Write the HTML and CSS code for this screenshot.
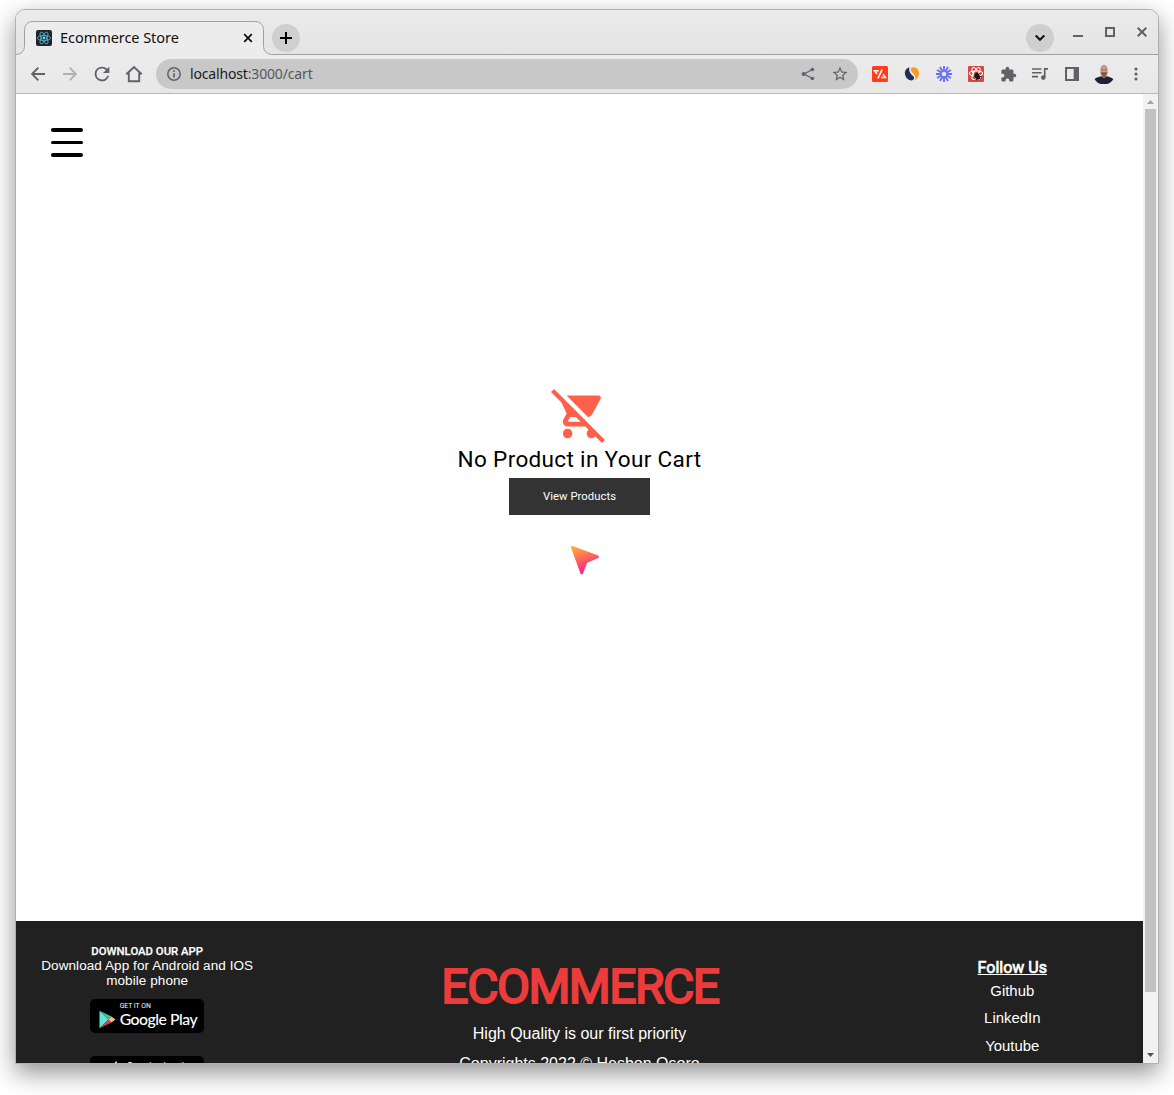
FILE: index.html
```html
<!DOCTYPE html>
<html lang="en">
<head>
<meta charset="utf-8">
<title>Ecommerce Store</title>
<link rel="stylesheet" href="styles.css">
</head>
<body>
<div class="window">
  <header class="tabstrip">
    <svg class="tab-outline" width="1142" height="45" viewBox="0 0 1142 45"><path d="M-1 44.5H0a8 8 0 0 0 8.5-8V19.5a8 8 0 0 1 8-8H239.5a8 8 0 0 1 8 8V36.500a8 8 0 0 0 8 8H1143V46H-1z" fill="#ececec" stroke="#a0a0a0"/></svg>
    <div class="tab">
      <svg class="favicon" viewBox="0 0 16 16" width="16" height="16"><rect width="16" height="16" rx="2" fill="#20232a"/><g fill="none" stroke="#55bdd6" stroke-width=".8"><ellipse cx="8" cy="8" rx="6.6" ry="2.6"/><ellipse cx="8" cy="8" rx="6.600" ry="2.600" transform="rotate(60 8 8)"/><ellipse cx="8" cy="8" rx="6.6" ry="2.6" transform="rotate(120 8 8)"/></g><circle cx="8" cy="8" r="1.4" fill="#61dafb"/></svg>
      <span class="tab-title">Ecommerce Store</span>
      <svg class="tab-close" viewBox="0 0 10 10" width="10" height="10"><path d="M1.200 1.200l7.600 7.600M8.800 1.200L1.200 8.800" stroke="#111" stroke-width="1.800"/></svg>
    </div>
    <div class="round-button new-tab"><svg width="14" height="14" viewBox="0 0 14 14"><path d="M7 1v12M1 7h12" stroke="#000" stroke-width="2"/></svg></div>
    <div class="round-button tab-search"><svg width="12" height="8" viewBox="0 0 12 8"><path d="M1.700 1.500L6 5.800l4.300-4.300" fill="none" stroke="#111" stroke-width="2"/></svg></div>
    <div class="window-controls">
      <svg viewBox="0 0 12 12"><path d="M1 10h10" stroke="#5f6368" stroke-width="2"/></svg>
      <svg viewBox="0 0 12 12"><path d="M2 2h8v8H2z" fill="none" stroke="#5f6368" stroke-width="2"/></svg>
      <svg viewBox="0 0 12 12"><path d="M1.700 1.700l8.600 8.600M10.300 1.700l-8.600 8.600" stroke="#5f6368" stroke-width="2"/></svg>
    </div>
  </header>
  <nav class="toolbar">
    <span class="tool"><svg viewBox="0 0 14 14" width="14" height="14"><path d="M14 7H1.500M7.300 .7L1 7l6.300 6.300" fill="none" stroke="#5f6368" stroke-width="1.900"/></svg></span>
    <span class="tool"><svg viewBox="0 0 14 14" width="14" height="14"><path d="M0 7h12.500M6.700 .7L13 7l-6.300 6.300" fill="none" stroke="#aeb0b2" stroke-width="1.900"/></svg></span>
    <span class="tool"><svg viewBox="0 0 24 24" width="22" height="22"><path fill="#5f6368" d="M17.650 6.350A7.960 7.960 0 0 0 12 4a8 8 0 1 0 7.730 10h-2.080A6 6 0 1 1 12 6c1.660 0 3.140.69 4.220 1.780L13 11h7V4z"/></svg></span>
    <span class="tool"><svg viewBox="0 0 18 18" width="18" height="18"><path d="M1.300 9.200L9 2l7.700 7.200M3.800 8v8.200h10.400V8" fill="none" stroke="#5f6368" stroke-width="1.900"/></svg></span>
    <div class="omnibox">
      <svg viewBox="0 0 14 14" width="14" height="14"><circle cx="7" cy="7" r="6.200" fill="none" stroke="#5f6368" stroke-width="1.500"/><path d="M7 6.200v4.300M7 3.300v1.700" stroke="#5f6368" stroke-width="1.700"/></svg>
      <span class="url"><b>localhost</b>:3000/cart</span>
      <svg class="share" viewBox="0 0 14 14" width="14" height="14"><path d="M11.500 2.500L3 7l8.500 4.500" fill="none" stroke="#5f6368" stroke-width="1.300"/><g fill="#5f6368"><circle cx="11.400" cy="2.500" r="1.800"/><circle cx="2.600" cy="7" r="2"/><circle cx="11.400" cy="11.500" r="1.800"/></g></svg>
      <svg viewBox="0 0 24 24" width="18" height="18"><path fill="#5f6368" d="M22 9.240l-7.190-.62L12 2 9.190 8.630 2 9.240l5.460 4.730L5.820 21 12 17.270 18.180 21l-1.630-7.030L22 9.240zM12 15.400l-3.760 2.270 1-4.280-3.320-2.880 4.380-.38L12 6.100l1.710 4.040 4.380.38-3.320 2.880 1 4.280L12 15.400z"/></svg>
    </div>
    <span class="tool"><svg viewBox="0 0 16 16" width="16" height="16"><rect width="16" height="16" rx="1.500" fill="#ff3d1a"/><path d="M10.200 3.300L5.800 12.500M6.800 4.700H2.500L5 8M9.200 11.500h4.300L11 8.200" fill="none" stroke="#fff" stroke-width="1.600"/></svg></span>
    <span class="tool"><svg viewBox="0 0 16 16" width="16" height="16"><path fill="#1f2f56" d="M5.300 1.200C1.800 2.500.7 5.200.9 7.500c.3 4 3.400 7 6.500 7 2.500 0 3.500-2.500 2-4.200C7.800 8.600 4.300 6.200 5.300 1.200z"/><path fill="#f99b28" d="M7.300 2c1.700-1.500 4.700-.9 6.400 1.300 2.700 3.700 1 9-2.900 11 .9-2 .8-3.800-.6-5.500C8.700 7 5.300 4.300 7.300 2z"/></svg></span>
    <span class="tool"><svg viewBox="0 0 16 16" width="16" height="16"><g stroke="#6870f5" stroke-width="1.900" stroke-dasharray="5.700 4.600"><path d="M8 0v16"/><path d="M8 0v16" transform="rotate(30 8 8)"/><path d="M8 0v16" transform="rotate(60 8 8)"/><path d="M8 0v16" transform="rotate(90 8 8)"/><path d="M8 0v16" transform="rotate(120 8 8)"/><path d="M8 0v16" transform="rotate(150 8 8)"/></g></svg></span>
    <span class="tool"><svg viewBox="0 0 16 16" width="16" height="16"><rect width="16" height="16" rx="1" fill="#d94744"/><g fill="none" stroke="#fff" stroke-width="1.100"><ellipse cx="8" cy="7.500" rx="6.600" ry="2.500"/><ellipse cx="8" cy="7.500" rx="6.600" ry="2.500" transform="rotate(60 8 7.500)"/><ellipse cx="8" cy="7.500" rx="6.600" ry="2.500" transform="rotate(120 8 7.500)"/></g><ellipse cx="9.300" cy="10.300" rx="2.600" ry="3.600" fill="#241414" transform="rotate(-25 9.300 10.300)"/><path d="M5.500 9l7 4M6 13l6-6M8.500 14.500l1-9M6 10.500h8" stroke="#241414" stroke-width=".7"/></svg></span>
    <span class="tool"><svg viewBox="0 0 24 24" width="17" height="17"><path fill="#5f6368" d="M20.500 11H19V7a2 2 0 0 0-2-2h-4V3.500a2.500 2.500 0 0 0-5 0V5H4a2 2 0 0 0-2 2v3.800h1.500a2.700 2.700 0 0 1 0 5.400H2V20c0 1.100.9 2 2 2h3.800v-1.500a2.700 2.700 0 0 1 5.400 0V22H17a2 2 0 0 0 2-2v-4h1.500a2.500 2.500 0 0 0 0-5z"/></svg></span>
    <span class="tool"><svg viewBox="0 0 16 14" width="16" height="14"><path d="M0 2h9.500M0 5.800h9.500M0 9.600h6" stroke="#5f6368" stroke-width="1.600"/><path d="M12.700 10V1.800H16" fill="none" stroke="#5f6368" stroke-width="1.700"/><circle cx="11.300" cy="10.600" r="2.300" fill="#5f6368"/></svg></span>
    <span class="tool"><svg viewBox="0 0 14 14" width="14" height="14"><path fill="#5f6368" fill-rule="evenodd" d="M0 0h14v14H0zM2 2v10h6.700V2z"/></svg></span>
    <span class="tool"><svg class="avatar" viewBox="0 0 20 20" width="20" height="20"><path fill="#1d2239" d="M.6 15C3 13 5 13.200 7 12.300l3 1.800 3-1.800c2 .9 4 .8 6.400 2.800C17.500 18.500 14 20.500 10 20.500S2.500 18.500 .6 15z"/><path fill="#94604f" d="M7.500 10h5v2.600L10 14.400l-2.500-1.800z"/><ellipse cx="10" cy="6.300" rx="3.700" ry="5.600" fill="#c29a8c"/><path fill="#8a5a4e" d="M6.500 7.800c1 .8 2 .4 3.500.4s2.500.4 3.500-.4c0 2.500-1.500 4.300-3.500 4.300S6.500 10.300 6.500 7.800z"/><path d="M7.500 5.700h1.800M10.700 5.700h1.800M8.700 9.600h2.600" stroke="#6b443b" stroke-width=".7"/></svg></span>
    <span class="tool"><svg viewBox="0 0 4 14" width="4" height="14"><g fill="#5f6368"><circle cx="2" cy="2" r="1.600"/><circle cx="2" cy="7" r="1.600"/><circle cx="2" cy="12" r="1.600"/></g></svg></span>
  </nav>
  <div class="viewport">
    <div class="page">
      <div class="menu"><i></i><i></i><i></i></div>
      <main class="empty-cart">
        <svg class="cart-icon" viewBox="0 0 24 24" width="56.400" height="56.400"><path fill="#ff604a" d="M22.730 22.730L2.770 2.770 2 2l-.73-.73L0 2.540l4.390 4.390 2.210 4.660-1.350 2.450c-.16.28-.25.61-.25.96 0 1.100.9 2 2 2h7.460l1.380 1.380c-.5.36-.83.95-.83 1.620 0 1.100.89 2 1.990 2 .67 0 1.260-.33 1.620-.84L21.460 24l1.270-1.270zM7.420 15c-.14 0-.25-.11-.25-.25l.03-.12.9-1.630h2.360l2 2H7.420zm8.130-2c.75 0 1.410-.41 1.750-1.030l3.580-6.490c.08-.14.12-.31.12-.48 0-.55-.45-1-1-1H6.540l9.010 9zM7 18c-1.100 0-1.990.9-1.990 2S5.900 22 7 22s2-.9 2-2-.9-2-2-2z"/></svg>
        <p class="message">No Product in Your Cart</p>
        <a class="view-products">View Products</a>
      </main>
      <footer class="footer">
        <section class="download">
          <h4>DOWNLOAD OUR APP</h4>
          <p>Download App for Android and IOS mobile phone</p>
          <div class="badge play">
            <svg viewBox="0 0 17 19" width="17" height="19"><path fill="#63e6d0" d="M.5.8v17.400L9.500 9.500z"/><path fill="#58b8a0" d="M.5.800L9.500 9.500l3-3z"/><path fill="#d13f78" d="M.5 18.200L9.500 9.500l3 3z"/><path fill="#f5c163" d="M12.500 6.500l-3 3 3 3 4-3z"/></svg>
            <div><small>GET IT ON</small><strong>Google Play</strong></div>
          </div>
          <div class="badge store">
            <svg viewBox="0 0 16 20" width="16" height="20"><path fill="#fff" d="M8 4C8 2 9.500.5 11 .2 11 2 9.800 3.800 8 4zM15 15c-2 5-4 5-6.500 3.700C5 20.500 1 17 1 11c0-5 4-6.500 7-4.700 2.500-1.200 5-.8 6.500 1.200-3 2-2.500 6 .5 7.500z"/></svg>
            <small>Download on the</small>
          </div>
        </section>
        <section class="brand">
          <h1>ECOMMERCE</h1>
          <p>High Quality is our first priority</p>
          <p>Copyrights 2022 © Hesbon Osoro</p>
        </section>
        <section class="follow">
          <h4>Follow Us</h4>
          <a>Github</a><a>LinkedIn</a><a>Youtube</a>
        </section>
      </footer>
    </div>
    <div class="scrollbar">
      <svg viewBox="0 0 15 15" width="15" height="15"><path fill="#a3a3a3" d="M4 10l3.500-4L11 10z"/></svg>
      <div class="thumb"></div>
      <svg viewBox="0 0 15 15" width="15" height="15"><path fill="#505050" d="M4 5l3.500 4L11 5z"/></svg>
    </div>
  </div>
</div>
<svg class="pointer" viewBox="0 0 30 30" width="30" height="30"><defs><linearGradient id="pointer-fill" x1="0" y1="0" x2=".35" y2="1"><stop offset="0" stop-color="#ffad3d"/><stop offset=".5" stop-color="#fb6a5c"/><stop offset="1" stop-color="#fb2187"/></linearGradient></defs><path d="M2.300 2.200L27.700 11.800 16.200 16.800 11.700 28z" fill="url(#pointer-fill)" stroke="url(#pointer-fill)" stroke-width="2.600" stroke-linejoin="round"/></svg>
</body>
</html>
```
FILE: styles.css
```css
* { box-sizing: border-box; margin: 0; }
body { width: 1174px; height: 1095px; overflow: hidden; background: #fff; padding: 9px 15px; font-family: "Liberation Sans", Arial, sans-serif; }
svg { display: block; flex: none; }
.window { width: 1144px; height: 1055px; border: 1px solid #b0b0b0; border-radius: 10px 10px 0 0; overflow: hidden; display: flex; flex-direction: column; background: #ececec; box-shadow: 0 9px 24px rgba(0,0,0,.43); }

.tabstrip { position: relative; height: 45px; flex: none; display: flex; align-items: flex-start; background: linear-gradient(#ebebeb, #e4e4e4); }
.tab-outline { position: absolute; left: 0; top: 0; }
.tab { position: relative; width: 240px; height: 33px; margin: 11px 0 0 8px; padding: 0 11px 0 12px; display: flex; align-items: center; }
.tab-title { margin: -2px 0 0 8px; font: 14.500px "Noto Sans", sans-serif; letter-spacing: -.05px; color: #111; white-space: nowrap; }
.tab-close { margin-left: auto; }
.round-button { position: relative; width: 28px; height: 28px; margin-top: 14px; border-radius: 50%; background: #cfcfcf; display: flex; align-items: center; justify-content: center; }
.new-tab { margin-left: 8px; }
.tab-search { margin-left: auto; }
.window-controls { position: relative; display: flex; gap: 20px; margin: 16px 10px 0 18px; }
.window-controls svg { width: 12px; height: 12px; }

.toolbar { height: 39px; flex: none; display: flex; align-items: center; padding-left: 6px; background: linear-gradient(#ececec, #e7e7e7); border-bottom: 1px solid #b9b9b9; }
.tool { width: 32px; flex: none; display: flex; justify-content: center; }
.omnibox { width: 702px; height: 30px; flex: none; margin: 0 6px; padding: 0 9px 0 11px; border-radius: 15px; background: #c8c8c8; display: flex; align-items: center; }
.url { margin: -2px 0 0 9px; font: 14px "Noto Sans", sans-serif; letter-spacing: -.16px; color: #55585c; white-space: nowrap; }
.url b { font-weight: 400; color: #1c1c1c; }
.share { margin: 0 16px 0 auto; }

.viewport { flex: 1; min-height: 0; display: flex; background: #fff; }
.page { width: 1127px; display: flex; flex-direction: column; overflow: hidden; }
.menu { width: 32px; height: 29px; margin: 34px 0 0 35px; flex: none; display: flex; flex-direction: column; justify-content: space-between; }
.menu i { height: 4px; border-radius: 2px; background: #000; }
.menu i:nth-child(2) { height: 3px; }
.empty-cart { height: 764px; flex: none; padding-top: 229px; display: flex; flex-direction: column; align-items: center; }
.cart-icon { width: 57px; height: 57px; }
.message { font: 22.540px/27px Roboto, sans-serif; letter-spacing: .33px; margin-top: 3px; color: #000; white-space: nowrap; }
.view-products { margin-top: 5px; width: 141px; height: 37px; background: #333; color: #fff; font: 11.270px/37px Roboto, sans-serif; letter-spacing: .05px; text-align: center; }

.footer { height: 142px; flex: none; overflow: hidden; background: #212121; color: #fff; padding: 0 22.500px; display: grid; grid-template-columns: 20% 60% 20%; text-align: center; }
.download { padding-top: 24px; display: flex; flex-direction: column; align-items: center; }
.download h4 { font: 500 11.350px/13px Roboto, sans-serif; padding-left: 1px; -webkit-text-stroke: .25px #fff; white-space: nowrap; }
.download p { font-size: 13.520px; letter-spacing: .07px; line-height: 15px; padding-left: 1px; }
.badge { width: 114px; height: 34px; flex: none; border-radius: 5px; background: #000; display: flex; align-items: center; padding-left: 9px; text-align: left; white-space: nowrap; }
.play { margin-top: 11px; }
.play svg { margin-top: 6px; }
.play div { margin: -2px 0 0 4px; }
.badge small { display: block; font: 400 6.800px/8px Roboto, sans-serif; }
.badge strong { display: block; font: 500 15.800px/18px Lato, sans-serif; letter-spacing: -.5px; }
.store { height: 42px; margin-top: 23px; align-items: flex-start; }
.store svg { margin: 5px 6px 0 7px; }
.badge.store small { font: 8.500px/10px Roboto, sans-serif; margin-top: 5px; }
.brand { padding-top: 37px; }
.brand h1 { font: 400 48px/57px Roboto, sans-serif; letter-spacing: -1.500px; padding-left: 1px; color: #eb3b3b; -webkit-text-stroke: 2px #eb3b3b; }
.brand p { font-size: 16px; line-height: 18px; margin-top: 10px; }
.brand p + p { margin-top: 12px; }
.follow { padding-top: 37px; display: flex; flex-direction: column; align-items: center; }
.follow h4 { font: 400 16px/20px Roboto, sans-serif; -webkit-text-stroke: .7px #fff; text-decoration: underline; }
.follow a { font-size: 14.900px; line-height: 17px; }
.follow h4 + a { margin-top: 5px; }
.follow a:nth-of-type(2) { margin: 10px 0 11px; }

.scrollbar { width: 15px; background: #f1f1f1; display: flex; flex-direction: column; }
.thumb { width: 11px; height: 883px; margin: 0 2px auto; background: #c1c1c1; }
.pointer { position: absolute; left: 570px; top: 545px; }
```
